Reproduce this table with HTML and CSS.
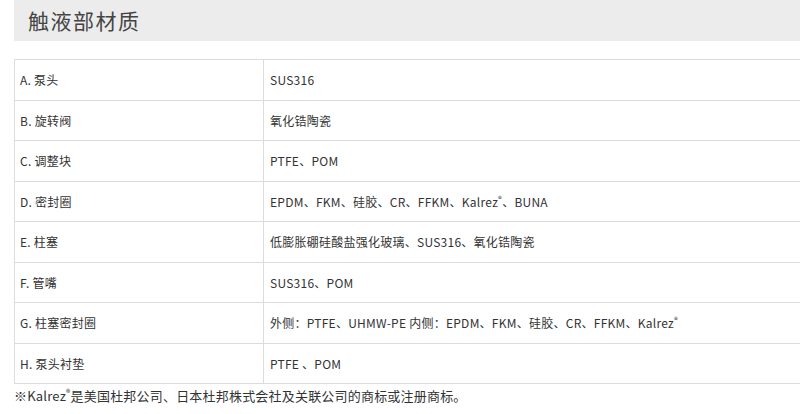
FILE: index.html
```html
<!DOCTYPE html>
<html lang="zh-CN">
<head>
<meta charset="utf-8">
<link rel="stylesheet" href="styles.css">
</head>
<body>
<div class="page">
  <h2 class="title">触液部材质</h2>
  <table class="spec">
    <tr><td class="k">A. 泵头</td><td class="v">SUS316</td></tr>
    <tr><td class="k">B. 旋转阀</td><td class="v">氧化锆陶瓷</td></tr>
    <tr><td class="k">C. 调整块</td><td class="v">PTFE、POM</td></tr>
    <tr><td class="k">D. 密封圈</td><td class="v">EPDM、FKM、硅胶、CR、FFKM、Kalrez<sup>®</sup>、BUNA</td></tr>
    <tr><td class="k">E. 柱塞</td><td class="v">低膨胀硼硅酸盐强化玻璃、SUS316、氧化锆陶瓷</td></tr>
    <tr><td class="k">F. 管嘴</td><td class="v">SUS316、POM</td></tr>
    <tr><td class="k">G. 柱塞密封圈</td><td class="v">外侧：PTFE、UHMW-PE 内侧：EPDM、FKM、硅胶、CR、FFKM、Kalrez<sup>®</sup></td></tr>
    <tr><td class="k">H. 泵头衬垫</td><td class="v">PTFE 、POM</td></tr>
  </table>
  <p class="note">※Kalrez<sup>®</sup>是美国杜邦公司、日本杜邦株式会社及关联公司的商标或注册商标。</p>
</div>
</body>
</html>
```
FILE: styles.css
```css
html, body {
  margin: 0;
  padding: 0;
  background: #fff;
  overflow: hidden;
}
body {
  font-family: "Noto Sans CJK SC", "Noto Sans", sans-serif;
  color: #333;
}
.page {
  padding-left: 14px;
}
.title {
  margin: 0;
  height: 41px;
  box-sizing: border-box;
  padding-left: 14px;
  background: #ececec;
  font-size: 21px;
  font-weight: normal;
  letter-spacing: 1.5px;
  line-height: 41px;
  color: #444;
}
.spec {
  margin-top: 18px;
  width: 786px;
  border-collapse: collapse;
  font-size: 12px;
  letter-spacing: 0.25px;
  color: #333;
}
.spec td {
  border: 1px solid #dcdcdc;
  height: 41px;
  box-sizing: border-box;
  padding: 0 6px;
  vertical-align: middle;
  line-height: 16px;
}
.spec tr:nth-child(even) td {
  height: 40px;
}
.spec td.k {
  width: 249px;
  padding-left: 5px;
}
.spec td.v {
  border-right: none;
}
.spec sup {
  font-size: 8px;
  vertical-align: 5px;
  line-height: 0;
}
.note {
  margin: 2px 0 0 0;
  font-size: 13px;
  letter-spacing: 0.2px;
  line-height: 20px;
  color: #333;
}
.note sup {
  font-size: 9px;
  vertical-align: 5px;
  line-height: 0;
}
```
